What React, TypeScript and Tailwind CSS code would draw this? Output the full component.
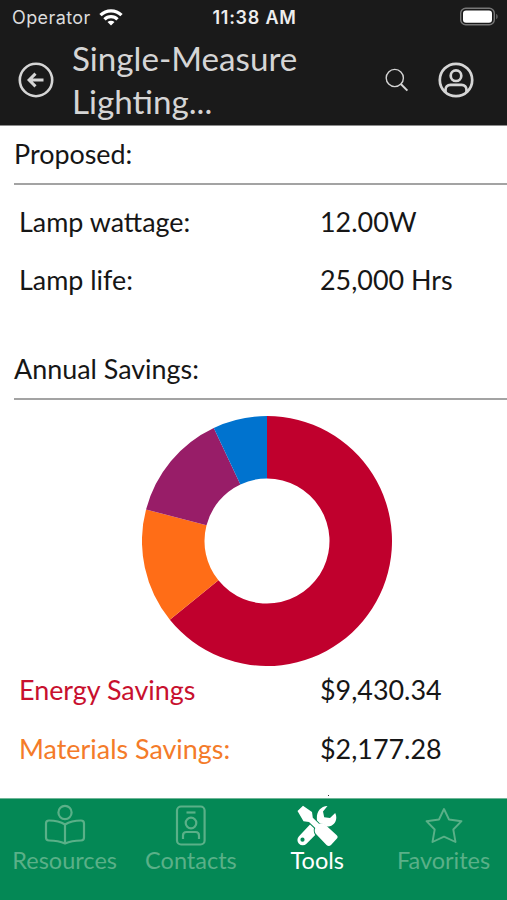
import type { ReactNode } from "react";

type Slice = { from: number; to: number; color: string };

const slices: Slice[] = [
  { from: 0, to: 231, color: "#c0002d" },
  { from: 231, to: 284.6, color: "#ff6d17" },
  { from: 284.6, to: 334.8, color: "#981d68" },
  { from: 334.8, to: 360, color: "#0073cf" },
];

function point(radius: number, angle: number) {
  const rad = ((angle - 90) * Math.PI) / 180;
  return `${125 + radius * Math.cos(rad)} ${125 + radius * Math.sin(rad)}`;
}

function slicePath({ from, to }: Slice) {
  const large = to - from > 180 ? 1 : 0;
  return `M${point(125, from)} A125 125 0 ${large} 1 ${point(125, to)} L${point(62.5, to)} A62.5 62.5 0 ${large} 0 ${point(62.5, from)} Z`;
}

function StatusBar() {
  return (
    <div className="grid h-[35px] grid-cols-3 items-center pl-3 pr-2 font-[Inter,sans-serif] text-[18px]">
      <div className="flex items-center gap-2 text-[#dcdcdc]">
        <span className="tracking-[0.4px]">Operator</span>
        <svg width="24" height="18" viewBox="0 0 24 18" fill="none" stroke="#fff" strokeWidth="3.3">
          <path d="M1.5 6.1a15 15 0 0 1 21 0" />
          <path d="M5.5 10.3a9.2 9.2 0 0 1 13 0" />
          <path d="M12 16.5l-3.5-3.4a5 5 0 0 1 7 0z" fill="#fff" stroke="none" />
        </svg>
      </div>
      <span className="-ml-0.5 whitespace-nowrap text-center font-semibold tracking-[0.75px] text-[#eee]">
        11:38 AM
      </span>
      <svg className="-mt-0.5 justify-self-end" width="40" height="19" viewBox="0 0 40 19" fill="none">
        <rect x="1.7" y="1.3" width="33.6" height="16.4" rx="5" stroke="#777" strokeWidth="1.4" />
        <rect x="4" y="3.5" width="29" height="12.2" rx="3" fill="#fff" />
        <path d="M37.3 7c1.7.6 1.7 4.6 0 5.2z" fill="#777" />
      </svg>
    </div>
  );
}

function NavBar() {
  return (
    <div className="flex h-[90px] items-center pl-[18px] pr-[33px] text-[#d5d5d5]">
      <svg width="36" height="36" viewBox="0 0 36 36" fill="none" stroke="currentColor" strokeWidth="2.6">
        <circle cx="18" cy="18" r="16.2" />
        <path d="M25.5 18H12M17.5 11.6L11.1 18l6.4 6.4" strokeWidth="3" />
      </svg>
      <h1 className="ml-[18px] w-[260px] text-[33.2px] leading-[43px]">
        Single-Measure Lighting...
      </h1>
      <svg className="ml-auto" width="24" height="24" viewBox="0 0 24 24" fill="none" stroke="currentColor">
        <circle cx="9.8" cy="10" r="8.6" strokeWidth="1.4" />
        <path d="M15.8 16l6.6 6.6" strokeWidth="2" />
      </svg>
      <svg className="ml-[29px]" width="36" height="36" viewBox="0 0 36 36" fill="none" stroke="currentColor" strokeWidth="2.7">
        <circle cx="18" cy="18" r="16.2" />
        <circle cx="18" cy="13.7" r="5.3" />
        <path d="M7.5 30.2v-2.4c0-3 2-5 5-5h11c3 0 5 2 5 5v2.4" />
      </svg>
    </div>
  );
}

function SectionTitle({ children }: { children: ReactNode }) {
  return (
    <h2 className="ml-3.5 h-[59px] shrink-0 border-b-2 border-[#a3a3a3] pt-[11px] text-[26.9px] leading-[34px]">
      {children}
    </h2>
  );
}

function Row({ label, value, color = "text-[#161616]" }: { label: string; value: string; color?: string }) {
  return (
    <div className="grid h-[58.5px] shrink-0 grid-cols-[301px_1fr] items-center pl-[19px] text-[26.9px] leading-[34px]">
      <span className={color}>{label}</span>
      <span>{value}</span>
    </div>
  );
}

function Tab({ label, active, children }: { label: string; active?: boolean; children: ReactNode }) {
  return (
    <div
      className={`flex w-[126.3px] shrink-0 flex-col items-center pt-[5px] ${active ? "text-white" : "text-[#5ab088]"}`}
    >
      <svg width="42" height="42" viewBox="0 0 42 42" fill="none" stroke="currentColor" strokeWidth="2.2" strokeLinejoin="round">
        {children}
      </svg>
      <span className="text-[23.5px] leading-[28px]">{label}</span>
    </div>
  );
}

export default function App() {
  return (
    <div className="flex h-[900px] w-[507px] flex-col overflow-hidden bg-white font-[Lato,sans-serif] text-[#161616]">
      <header className="h-[126px] shrink-0 border-b border-[#8c8c8c] bg-[#1a1a1a]">
        <StatusBar />
        <NavBar />
      </header>

      <main className="flex h-[672px] shrink-0 flex-col overflow-hidden">
        <SectionTitle>Proposed:</SectionTitle>
        <div className="mt-[7.5px] shrink-0">
          <Row label="Lamp wattage:" value="12.00W" />
          <Row label="Lamp life:" value="25,000 Hrs" />
        </div>
        <div className="mt-[31.5px] shrink-0">
          <SectionTitle>Annual Savings:</SectionTitle>
        </div>
        <svg className="ml-[142px] mt-4 shrink-0" width="250" height="250" viewBox="0 0 250 250">
          {slices.map((slice) => (
            <path key={slice.color} d={slicePath(slice)} fill={slice.color} />
          ))}
        </svg>
        <div className="-mt-[5px] shrink-0">
          <Row label="Energy Savings" value="$9,430.34" color="text-[#c8102e]" />
          <Row label="Materials Savings:" value="$2,177.28" color="text-[#f47b29]" />
        </div>
        {/* top of the next amount, peeking out above the tab bar */}
        <span className="ml-[328px] mt-[17px] h-px w-px shrink-0 bg-[#333]" />
      </main>

      <nav className="flex h-[102px] shrink-0 border-t border-[#6fb697] bg-[#048855] pl-[1.5px]">
        <Tab label="Resources">
          <circle cx="21" cy="8.5" r="6.6" />
          <path d="M21 20.5c-4.8-3-10-4-16-4a3 3 0 0 0-3 3v14a3 3 0 0 0 3 3c6 0 11.2.8 16 3 4.8-2.2 10-3 16-3a3 3 0 0 0 3-3v-14a3 3 0 0 0-3-3c-6 0-11.2 1-16 4zM21 20.5v18" />
        </Tab>
        <Tab label="Contacts">
          <rect x="7" y="2.5" width="27.6" height="38" rx="4" />
          <path d="M16.5 8.5h9" />
          <circle cx="21" cy="19" r="5.3" />
          <path d="M13 35v-3.5c0-2 1.5-3.5 3.5-3.5h9c2 0 3.500 1.500 3.500 3.500V35" />
        </Tab>
        <Tab label="Tools" active>
          <g fill="currentColor" stroke="none">
            <path d="M1.5 7L7 1.800l9 6.200.8 5.800 6.200 6c2.500-1 4.500-.7 6 .7L40.500 31c1.500 1.500 1.500 2.500 0 4L35 41c-1.500 1.300-3 1.300-4.500 0L20 30c-1.500-1.500-1.700-4-.7-6L13 18l-5.500-.8z" />
            <path d="M31.500 2L27 7.500l1.200 5.700L34 14l5.200-5c3.500 7-1.800 15-9.200 13.200-1.300-1.700-3.700-3-6-2.700L21 16.500C20 8 24 2.500 31.500 2z" />
            <path fillRule="evenodd" d="M14 20.500l4 3.700c-.6 2.500 0 5 1.200 6.800L10.500 39.800a5.300 5.300 0 0 1-7.500-7.600zM6.500 33.600a2.100 2.100 0 1 0 0 4.200 2.100 2.100 0 0 0 0-4.200z" />
          </g>
        </Tab>
        <Tab label="Favorites">
          <path d="M21 5l5 10.500 12.500 1.700-8.200 8.300 2.200 12.500L21 32.600 9.500 38l2.200-12.500L3.500 17.200 16 15.500z" strokeWidth="1.900" />
        </Tab>
      </nav>
    </div>
  );
}
